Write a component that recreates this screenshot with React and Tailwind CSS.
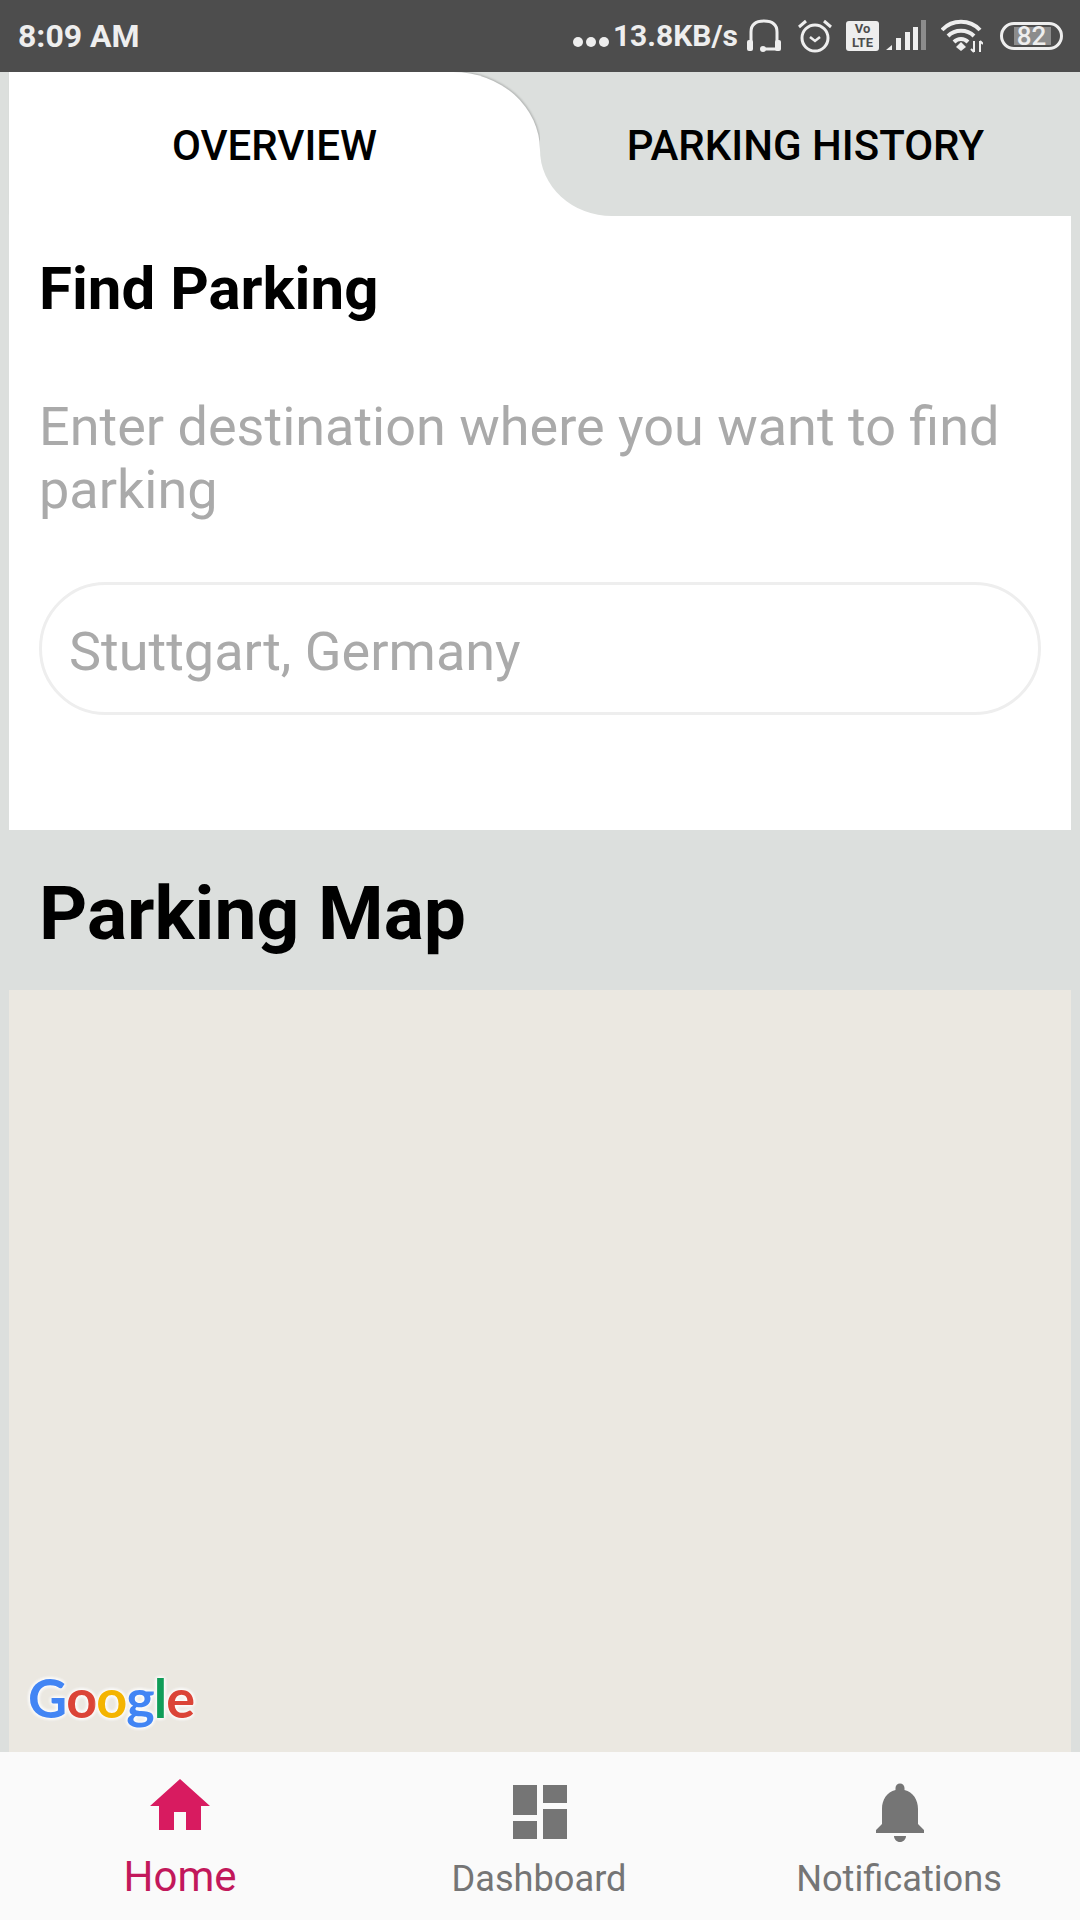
const ROBOTO = "font-['Roboto',sans-serif]";

function HeadsetIcon() {
  return (
    <svg width="36" height="36" viewBox="0 0 36 36" fill="none" stroke="#eeeeee" strokeWidth="3">
      <path d="M5 24V14C5 6 10 3 18 3s13 3 13 11v10" />
      <rect x="1" y="22" width="6" height="11" rx="2" fill="#eeeeee" stroke="none" />
      <rect x="29" y="22" width="6" height="11" rx="2" fill="#eeeeee" stroke="none" />
      <path d="M17 31h14" />
      <circle cx="17" cy="31" r="3" fill="#eeeeee" stroke="none" />
    </svg>
  );
}

function AlarmIcon() {
  return (
    <svg width="36" height="36" viewBox="0 0 36 36" fill="none" stroke="#eeeeee" strokeWidth="3">
      <circle cx="18" cy="20" r="13" />
      <path d="M13 19l5 4 5-4" strokeWidth="2.5" />
      <path d="M2 9l7-6M34 9l-7-6" strokeWidth="3" />
    </svg>
  );
}

function VoLteIcon() {
  return (
    <div className="w-[33px] h-[30px] rounded-[3px] bg-[#eeeeee] flex flex-col items-center justify-center text-[#4d4d4d] font-bold">
      <span className="text-[13px] leading-[14px]">Vo</span>
      <span className="text-[13px] leading-[14px]">LTE</span>
    </div>
  );
}

function SignalIcon() {
  return (
    <svg width="40" height="32" viewBox="0 0 40 32">
      <path d="M0 30l6-5v5z" fill="#eeeeee" />
      <rect x="10" y="18" width="5" height="12" fill="#eeeeee" />
      <rect x="19" y="12" width="5" height="18" fill="#eeeeee" />
      <rect x="27" y="7" width="5" height="23" fill="#eeeeee" />
      <rect x="35" y="0" width="5" height="30" fill="#8c8c8c" />
    </svg>
  );
}

function WifiIcon() {
  return (
    <svg width="42" height="36" viewBox="0 0 42 36" fill="none" stroke="#eeeeee" strokeWidth="4">
      <path d="M1 12C11 1 29 1 39 12" />
      <path d="M7 18c7-7 19-7 26 0" />
      <path d="M13 24c4-4 10-4 14 0" />
      <path d="M20 24l5 5-5 4-5-4z" fill="#eeeeee" stroke="none" />
      <path d="M33 23v11M39 23v11" strokeWidth="2" />
      <path d="M30 31l3 3M42 26l-3-3" strokeWidth="2" />
    </svg>
  );
}

function BatteryIcon() {
  return (
    <div className="relative w-[63px] h-[28px] rounded-full border-[3px] border-[#eeeeee] flex items-center justify-center">
      <div className="absolute left-[11px] top-[2px] bottom-[2px] w-[37px] bg-[#8c8c8c]" />
      <span className="relative text-[26px] leading-none font-medium text-[#eeeeee]">82</span>
    </div>
  );
}

function StatusBar() {
  return (
    <div className="relative z-20 h-[72px] bg-[#4d4d4d] flex items-center pl-[18px] text-[#eeeeee] font-bold">
      <span className="text-[32px] leading-none">8:09 AM</span>
      <div className="ml-auto flex items-center pr-[17px]">
        <div className="flex gap-[3px] mt-[12px] mr-[4px]">
          <div className="w-[10px] h-[10px] rounded-full bg-[#eeeeee]" />
          <div className="w-[10px] h-[10px] rounded-full bg-[#eeeeee]" />
          <div className="w-[10px] h-[10px] rounded-full bg-[#eeeeee]" />
        </div>
        <span className="text-[30px] leading-none mr-[8px]">13.8KB/s</span>
        <div className="mr-[15px]"><HeadsetIcon /></div>
        <div className="mr-[13px]"><AlarmIcon /></div>
        <div className="mr-[7px]"><VoLteIcon /></div>
        <div className="mr-[15px]"><SignalIcon /></div>
        <div className="mr-[17px]"><WifiIcon /></div>
        <BatteryIcon />
      </div>
    </div>
  );
}

function Tabs() {
  return (
    <div className="h-[144px] flex px-[9px] bg-[#dcdfdd] text-black font-medium text-[42px]">
      <div className="w-[531px] pt-[2px] bg-white rounded-tr-[87px_78px] shadow-[1px_-1px_2px_rgba(0,0,0,0.18)] flex items-center justify-center">
        OVERVIEW
      </div>
      <div className="w-[531px] bg-white">
        <div className="h-full pt-[2px] bg-[#dcdfdd] rounded-bl-[72px_66px] flex items-center justify-center">
          PARKING HISTORY
        </div>
      </div>
    </div>
  );
}

function FindParking() {
  return (
    <div className="mx-[9px] h-[614px] bg-white px-[30px] pt-[40px]">
      <h2 className="text-[60px] leading-[66px] font-bold text-black">Find Parking</h2>
      <p className="mt-[73px] text-[54px] leading-[63px] text-[#aaaaaa]">
        Enter destination where you want to find parking
      </p>
      <div className="mt-[61px] w-[1002px] h-[133px] pt-[6px] rounded-full border-[3px] border-[#eeeeee] flex items-center pl-[27px] text-[54px] text-[#aaaaaa]">
        Stuttgart, Germany
      </div>
    </div>
  );
}

function GoogleLogo() {
  return (
    <div className="flex text-[54px] leading-[60px] tracking-[-1px] font-['Lato',sans-serif] font-bold [text-shadow:0_0_4px_#fff,0_0_4px_#fff,0_0_4px_#fff]">
      <span className="text-[#4285f4]">G</span>
      <span className="text-[#db4437]">o</span>
      <span className="text-[#f4b400]">o</span>
      <span className="text-[#4285f4]">g</span>
      <span className="text-[#0f9d58]">l</span>
      <span className="text-[#db4437]">e</span>
    </div>
  );
}

function ParkingMap() {
  return (
    <div className="flex-1 flex flex-col">
      <div className="h-[160px] pt-[6px] flex items-center pl-[39px]">
        <h2 className="text-[75px] leading-none font-bold text-black">Parking Map</h2>
      </div>
      <div className="flex-1 mx-[9px] bg-[#ebe8e1] flex flex-col justify-end pl-[19px] pb-[24px]">
        <GoogleLogo />
      </div>
    </div>
  );
}

function NavItem({ icon, label, className }) {
  return (
    <div className="flex-1 flex flex-col items-center">
      {icon}
      <span className={className}>{label}</span>
    </div>
  );
}

function BottomNav() {
  return (
    <div className="h-[168px] bg-[#fafafa] flex pt-[24px]">
      <NavItem
        label="Home"
        className="mt-[10px] text-[42px] leading-[50px] text-[#c2185b]"
        icon={
          <svg width="72" height="72" viewBox="0 0 24 24" fill="#d81b60" className="-mt-[6px]">
            <path d="M10 20v-6h4v6h5v-8h3L12 3 2 12h3v8z" />
          </svg>
        }
      />
      <NavItem
        label="Dashboard"
        className="-ml-[2px] mt-[9px] text-[36.2px] leading-[44px] text-[#757575]"
        icon={
          <svg width="72" height="72" viewBox="0 0 24 24" fill="#757575">
            <path d="M3 13h8V3H3v10zm0 8h8v-6H3v6zm10 0h8V11h-8v10zm0-18v6h8V3h-8z" />
          </svg>
        }
      />
      <NavItem
        label="Notifications"
        className="-ml-[2px] mt-[9px] text-[36.2px] leading-[44px] text-[#757575]"
        icon={
          <svg width="72" height="72" viewBox="0 0 24 24" fill="#757575">
            <path d="M12 22c1.1 0 2-.9 2-2h-4c0 1.1.89 2 2 2zm6-6v-5c0-3.07-1.64-5.64-4.5-6.32V4c0-.83-.67-1.5-1.5-1.5s-1.5.67-1.5 1.5v.68C7.63 5.36 6 7.92 6 11v5l-2 2v1h16v-1l-2-2z" />
          </svg>
        }
      />
    </div>
  );
}

export default function App() {
  return (
    <div className={`w-[1080px] h-[1920px] flex flex-col bg-[#dcdfdd] overflow-hidden ${ROBOTO}`}>
      <StatusBar />
      <Tabs />
      <FindParking />
      <ParkingMap />
      <BottomNav />
    </div>
  );
}
